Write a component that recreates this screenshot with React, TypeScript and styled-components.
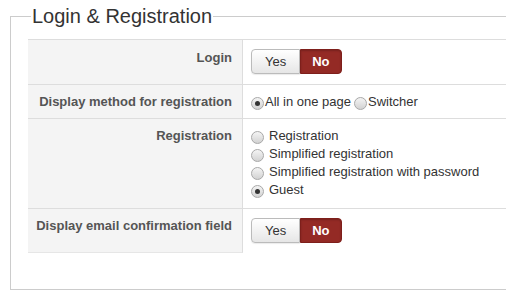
import React from "react";
import styled, { createGlobalStyle } from "styled-components";

const GlobalStyle = createGlobalStyle`
  html, body {
    margin: 0;
    padding: 0;
    background: #fff;
    overflow: hidden;
  }
  body {
    font-family: "Liberation Sans", Arial, sans-serif;
    font-size: 13px;
    color: #333;
  }
`;

const Fieldset = styled.fieldset`
  margin: 5px 0 0 10px;
  width: 510px;
  height: 285px;
  padding: 0 0 0 17px;
  border: 1px solid #ccc;
  box-sizing: border-box;
`;

const Legend = styled.legend`
  margin-left: 3px;
  padding: 0 1px;
  font-size: 20px;
  line-height: 22px;
  color: #333;
`;

const Table = styled.div`
  margin-top: 12px;
  width: 478px;
`;

const Row = styled.div`
  display: grid;
  grid-template-columns: 215px 1fr;
  border-top: 1px solid #ddd;
`;

const Label = styled.div<{ $top: number; $last?: boolean }>`
  background: #f4f4f4;
  text-align: right;
  font-weight: bold;
  color: #555;
  line-height: 18px;
  padding: ${(p) => p.$top}px 10px 0 8px;
  border-right: 1px solid #ddd;
  border-bottom: ${(p) => (p.$last ? "1px solid #e6e6e6" : "none")};
`;

const Cell = styled.div<{ $top: number; $bottom: number }>`
  padding: ${(p) => p.$top}px 8px ${(p) => p.$bottom}px;
  line-height: 18px;
`;

const Toggle = styled.div`
  display: inline-flex;
`;

const ToggleButton = styled.span<{ $active?: boolean; $side: "left" | "right" }>`
  display: inline-block;
  height: 25px;
  box-sizing: border-box;
  line-height: 23px;
  padding: 0 ${(p) => (p.$active ? 11 : 13)}px;
  font-size: 13px;
  border: 1px solid ${(p) => (p.$active ? "#7e1f1b" : "#bbb")};
  border-radius: ${(p) => (p.$side === "left" ? "4px 0 0 4px" : "0 4px 4px 0")};
  background: ${(p) =>
    p.$active ? "#942a25" : "linear-gradient(#ffffff, #e6e6e6)"};
  color: ${(p) => (p.$active ? "#fff" : "#333")};
  font-weight: ${(p) => (p.$active ? "bold" : "normal")};
  box-shadow: ${(p) =>
    p.$active ? "inset 0 1px 2px rgba(0,0,0,0.2)" : "0 1px 1px rgba(0,0,0,0.08)"};
`;

const RadioList = styled.div<{ $inline?: boolean }>`
  display: flex;
  flex-direction: ${(p) => (p.$inline ? "row" : "column")};
  gap: ${(p) => (p.$inline ? 3 : 0)}px;
`;

const RadioItem = styled.label<{ $gap: number }>`
  display: inline-flex;
  align-items: center;
  gap: ${(p) => p.$gap}px;
  height: 18px;
`;

const RadioDot = styled.span<{ $checked?: boolean }>`
  position: relative;
  width: 11px;
  height: 11px;
  border-radius: 50%;
  border: 1px solid #a8a8a8;
  background: linear-gradient(#f4f4f4, #d2d2d2);
  margin-top: 3px;
  &::after {
    content: "";
    display: ${(p) => (p.$checked ? "block" : "none")};
    position: absolute;
    left: 3px;
    top: 3px;
    width: 5px;
    height: 5px;
    border-radius: 50%;
    background: #333;
  }
`;

function YesNo() {
  return (
    <Toggle>
      <ToggleButton $side="left">Yes</ToggleButton>
      <ToggleButton $side="right" $active>
        No
      </ToggleButton>
    </Toggle>
  );
}

const registrationOptions = [
  "Registration",
  "Simplified registration",
  "Simplified registration with password",
  "Guest",
];

export default function App() {
  return (
    <>
      <GlobalStyle />
      <Fieldset>
        <Legend>Login &amp; Registration</Legend>
        <Table>
          <Row>
            <Label $top={9}>Login</Label>
            <Cell $top={9} $bottom={10}>
              <YesNo />
            </Cell>
          </Row>
          <Row>
            <Label $top={8}>Display method for registration</Label>
            <Cell $top={8} $bottom={7}>
              <RadioList $inline>
                <RadioItem $gap={1}>
                  <RadioDot $checked />
                  All in one page
                </RadioItem>
                <RadioItem $gap={1}>
                  <RadioDot />
                  Switcher
                </RadioItem>
              </RadioList>
            </Cell>
          </Row>
          <Row>
            <Label $top={8}>Registration</Label>
            <Cell $top={8} $bottom={9}>
              <RadioList>
                {registrationOptions.map((opt) => (
                  <RadioItem key={opt} $gap={5}>
                    <RadioDot $checked={opt === "Guest"} />
                    {opt}
                  </RadioItem>
                ))}
              </RadioList>
            </Cell>
          </Row>
          <Row>
            <Label $top={8} $last>
              Display email confirmation field
            </Label>
            <Cell $top={9} $bottom={10}>
              <YesNo />
            </Cell>
          </Row>
        </Table>
      </Fieldset>
    </>
  );
}
